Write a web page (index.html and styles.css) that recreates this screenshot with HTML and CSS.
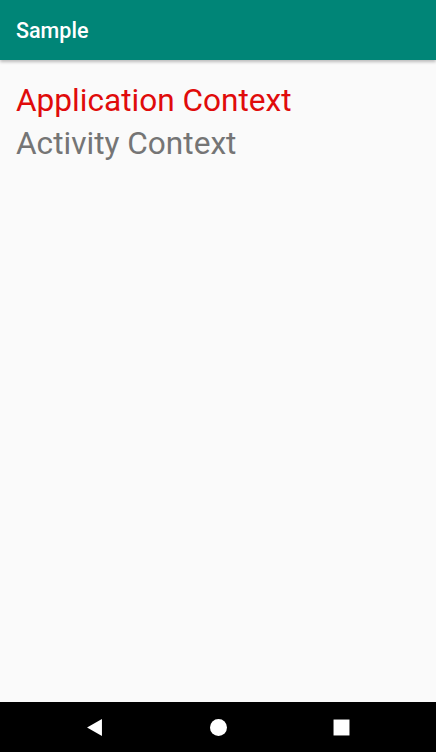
FILE: index.html
```html
<!DOCTYPE html>
<html lang="en">
<head>
    <meta charset="UTF-8">
    <meta name="viewport" content="width=device-width, initial-scale=1.0">
    <title>Sample</title>
    <link rel="stylesheet" href="styles.css">
</head>
<body>
    <div class="screen">
        <div class="app-bar">Sample</div>
        <div class="content">
            <div class="label app">Application Context</div>
            <div class="label activity">Activity Context</div>
        </div>
        <!-- Navigation bar -->
        <div class="nav-bar">
            <svg class="nav-icon" viewBox="0 0 16 16"><polygon points="15,0 15,16 1,8" fill="#fff"/></svg>
            <svg class="nav-icon" viewBox="0 0 16 16"><circle cx="8" cy="8" r="8" fill="#fff"/></svg>
            <svg class="nav-icon" viewBox="0 0 16 16"><rect x="0.5" y="0.5" width="15" height="15" fill="#fff"/></svg>
        </div>
    </div>
</body>
</html>
```

FILE: styles.css
```css
html, body {
    margin: 0;
    padding: 0;
}
body {
    font-family: Roboto, "Noto Sans", sans-serif;
    background-color: #fafafa;
}
.screen {
    width: 436px;
    height: 752px;
    display: flex;
    flex-direction: column;
}
.app-bar {
    height: 60px;
    background: #008577;
    color: white;
    font-size: 21.5px;
    font-weight: 500;
    padding-left: 16px;
    display: flex;
    align-items: center;
    box-shadow: 0 2px 3px rgba(0, 0, 0, 0.25);
    position: relative;
    z-index: 1;
}
.content {
    flex: 1;
    padding: 19px 16px 0;
}
.label {
    font-size: 31.6px;
    line-height: 43px;
}
.app {
    color: #e00b0b;
}
.activity {
    color: #757575;
}
.nav-bar {
    height: 50px;
    background: black;
    display: flex;
    justify-content: space-between;
    align-items: center;
    padding: 0 86px;
}
.nav-icon {
    width: 17px;
    height: 17px;
}
```
